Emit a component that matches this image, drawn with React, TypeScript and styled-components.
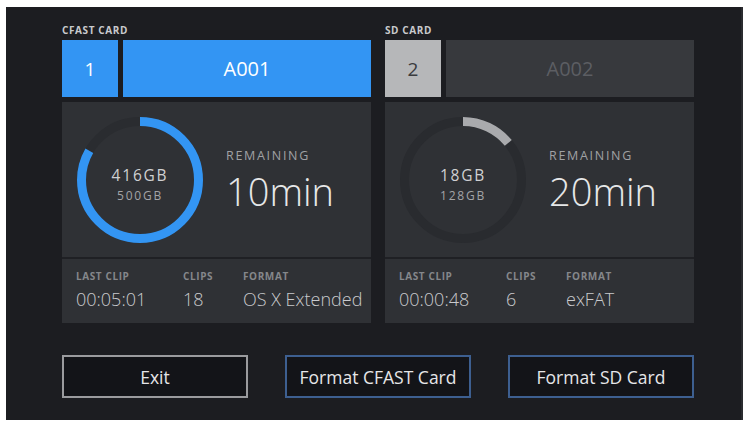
import React from 'react';
import styled, { createGlobalStyle } from 'styled-components';

const GlobalStyle = createGlobalStyle`
  html, body {
    margin: 0;
    padding: 0;
    background: #ffffff;
  }
  body {
    font-family: 'Open Sans', 'Liberation Sans', sans-serif;
  }
`;

const Screen = styled.div`
  margin: 7px 0 0 6px;
  width: 737px;
  height: 413px;
  box-sizing: border-box;
  background: #1c1d21;
  border-right: 2px solid #2a2b2f;
  padding: 17px 0 0 56px;
`;

const CardsRow = styled.div`
  display: grid;
  grid-template-columns: 309px 309px;
  column-gap: 14px;
`;

const Card = styled.div`
  display: flex;
  flex-direction: column;
`;

const CardLabel = styled.div`
  height: 13px;
  line-height: 13px;
  margin-bottom: 3px;
  font-size: 10px;
  font-weight: 700;
  letter-spacing: 0.6px;
  color: #c9cacd;
`;

const Header = styled.div`
  display: flex;
  gap: 5px;
  height: 57px;
`;

const SlotBox = styled.div<{ $active: boolean }>`
  width: 56px;
  display: flex;
  align-items: center;
  justify-content: center;
  font-size: 19px;
  background: ${(p) => (p.$active ? '#3395f3' : '#b6b7b9')};
  color: ${(p) => (p.$active ? '#ffffff' : '#3a3b3e')};
`;

const ReelBox = styled.div<{ $active: boolean }>`
  flex: 1;
  display: flex;
  align-items: center;
  justify-content: center;
  font-size: 20px;
  background: ${(p) => (p.$active ? '#3395f3' : '#37393d')};
  color: ${(p) => (p.$active ? '#ffffff' : '#5c5e63')};
`;

const Body = styled.div`
  margin-top: 5px;
  height: 221px;
  background: #2f3135;
  display: flex;
  flex-direction: column;
`;

const Usage = styled.div`
  height: 155px;
  display: flex;
  align-items: center;
  padding-left: 13px;
  gap: 21px;
  border-bottom: 2px solid #1f2024;
`;

const Ring = styled.div`
  position: relative;
  width: 130px;
  height: 130px;
  svg {
    display: block;
  }
`;

/* capacity figures sit in the middle of the ring */
const RingText = styled.div`
  position: absolute;
  inset: 0;
  display: flex;
  flex-direction: column;
  align-items: center;
  justify-content: center;
  gap: 5px;
  padding-top: 9px;
`;

const Used = styled.div`
  font-size: 15.5px;
  letter-spacing: 1.8px;
  line-height: 18px;
  color: #cfd0d2;
`;

const Total = styled.div`
  font-size: 12px;
  letter-spacing: 1.8px;
  line-height: 14px;
  color: #a3a4a7;
`;

const Remaining = styled.div`
  display: flex;
  flex-direction: column;
  padding-top: 2px;
`;

const RemainingLabel = styled.div`
  font-size: 12.5px;
  letter-spacing: 1.7px;
  color: #a0a1a4;
  line-height: 16px;
`;

const RemainingValue = styled.div`
  font-size: 38px;
  font-weight: 300;
  color: #e6e7e8;
  line-height: 46px;
  margin-top: 4px;
`;

const Stats = styled.div`
  flex: 1;
  display: grid;
  grid-template-columns: 107px 60px 1fr;
  padding: 11px 0 0 14px;
`;

const Stat = styled.div`
  display: flex;
  flex-direction: column;
  gap: 5px;
`;

const StatLabel = styled.div`
  font-size: 10px;
  font-weight: 700;
  letter-spacing: 0.6px;
  line-height: 13px;
  color: #85878b;
`;

const StatValue = styled.div`
  font-size: 18px;
  font-weight: 300;
  line-height: 23px;
  color: #c9cacd;
  white-space: nowrap;
`;

const ButtonsRow = styled.div`
  display: flex;
  gap: 37px;
  margin-top: 32px;
`;

const ActionButton = styled.button<{ $accent?: boolean }>`
  width: 186px;
  height: 43px;
  box-sizing: border-box;
  background: #131418;
  border: 2px solid ${(p) => (p.$accent ? '#3d5f90' : '#9a9b9e')};
  color: #e6e6e8;
  font-family: 'Open Sans', 'Liberation Sans', sans-serif;
  font-size: 17.5px;
  padding: 0;
  cursor: pointer;
`;

type Media = {
  label: string;
  slot: string;
  reel: string;
  active: boolean;
  used: string;
  total: string;
  fraction: number;
  arc: string;
  track: string;
  remaining: string;
  lastClip: string;
  clips: string;
  format: string;
};

const media: Media[] = [
  {
    label: 'CFAST CARD',
    slot: '1',
    reel: 'A001',
    active: true,
    used: '416GB',
    total: '500GB',
    fraction: 416 / 500,
    arc: '#3395f3',
    track: '#2a2c30',
    remaining: '10min',
    lastClip: '00:05:01',
    clips: '18',
    format: 'OS X Extended',
  },
  {
    label: 'SD CARD',
    slot: '2',
    reel: 'A002',
    active: false,
    used: '18GB',
    total: '128GB',
    fraction: 18 / 128,
    arc: '#a9aaad',
    track: '#292b2f',
    remaining: '20min',
    lastClip: '00:00:48',
    clips: '6',
    format: 'exFAT',
  },
];

function UsageRing({ m }: { m: Media }) {
  const r = 58.5;
  const c = 2 * Math.PI * r;
  return (
    <Ring>
      <svg width="130" height="130" viewBox="0 0 130 130">
        <circle cx="65" cy="65" r={r} fill="none" stroke={m.track} strokeWidth="9" />
        <circle
          cx="65"
          cy="65"
          r={r}
          fill="none"
          stroke={m.arc}
          strokeWidth="9"
          strokeDasharray={`${c * m.fraction} ${c}`}
          transform="rotate(-90 65 65)"
        />
      </svg>
      <RingText>
        <Used>{m.used}</Used>
        <Total>{m.total}</Total>
      </RingText>
    </Ring>
  );
}

function MediaCard({ m }: { m: Media }) {
  return (
    <Card>
      <CardLabel>{m.label}</CardLabel>
      <Header>
        <SlotBox $active={m.active}>{m.slot}</SlotBox>
        <ReelBox $active={m.active}>{m.reel}</ReelBox>
      </Header>
      <Body>
        <Usage>
          <UsageRing m={m} />
          <Remaining>
            <RemainingLabel>REMAINING</RemainingLabel>
            <RemainingValue>{m.remaining}</RemainingValue>
          </Remaining>
        </Usage>
        <Stats>
          <Stat>
            <StatLabel>LAST CLIP</StatLabel>
            <StatValue>{m.lastClip}</StatValue>
          </Stat>
          <Stat>
            <StatLabel>CLIPS</StatLabel>
            <StatValue>{m.clips}</StatValue>
          </Stat>
          <Stat>
            <StatLabel>FORMAT</StatLabel>
            <StatValue>{m.format}</StatValue>
          </Stat>
        </Stats>
      </Body>
    </Card>
  );
}

export default function App() {
  return (
    <>
      <GlobalStyle />
      <Screen>
        <CardsRow>
          {media.map((m) => (
            <MediaCard key={m.label} m={m} />
          ))}
        </CardsRow>
        <ButtonsRow>
          <ActionButton>Exit</ActionButton>
          <ActionButton $accent>Format CFAST Card</ActionButton>
          <ActionButton $accent>Format SD Card</ActionButton>
        </ButtonsRow>
      </Screen>
    </>
  );
}
